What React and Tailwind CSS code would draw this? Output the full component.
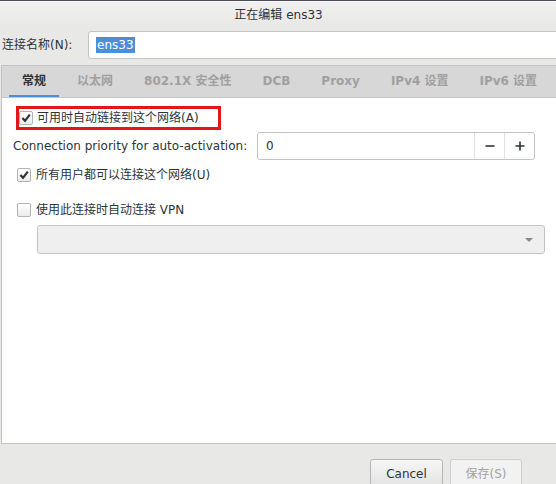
import React from 'react';

const font = { fontFamily: '"DejaVu Sans", "Noto Sans CJK SC", sans-serif' };

const Check = ({ checked }) => (
  <span className="flex items-center justify-center w-[14px] h-[14px] rounded-[2px] border border-[#b4b4b4] bg-gradient-to-b from-white to-[#ececec] shrink-0">
    {checked && (
      <svg width="10" height="10" viewBox="0 0 10 10">
        <path d="M1.4 5 L4 7.8 L8.8 1.6" fill="none" stroke="#2e3436" strokeWidth="2.2" />
      </svg>
    )}
  </span>
);

const tabs = ['常规', '以太网', '802.1X 安全性', 'DCB', 'Proxy', 'IPv4 设置', 'IPv6 设置'];

export default function App() {
  return (
    <div
      className="w-[556px] h-[484px] overflow-hidden bg-[#e8e8e7] flex flex-col text-[12px] text-[#2e3436]"
      style={font}
    >
      {/* title bar */}
      <div className="h-[1px] bg-[#4b4d55] shrink-0"></div>
      <div className="h-[26px] shrink-0 flex items-center justify-center bg-gradient-to-b from-[#f0f0f0] to-[#e8e8e7] border-t border-[#f8f8f8]">
        <span className="pl-[1px]">正在编辑 ens33</span>
      </div>

      {/* name row */}
      <div className="mt-[4px] h-[28px] flex items-center shrink-0">
        <span className="pl-[2px] w-[88px] shrink-0">连接名称(N):</span>
        <div className="w-[490px] h-[28px] shrink-0 rounded-[3px] border border-[#c4c4c4] bg-white flex items-center pl-[7px]">
          <span className="bg-[#4a90d9] text-white px-[1px] leading-[16px]">ens33</span>
        </div>
      </div>

      {/* notebook */}
      <div className="mt-[6px] ml-[1px] w-[570px] h-[379px] shrink-0 flex flex-col border border-[#c2c2c2] bg-white">
        <div className="h-[32px] shrink-0 bg-[#d7d7d7] border-b border-[#c6c6c6] flex items-stretch pl-[7px] gap-[5px] font-bold">
          {tabs.map((t, i) => (
            <div
              key={t}
              className={`flex items-center px-[13px] border-b-2 ${
                i === 0 ? 'border-[#4a90d9] text-[#2e3436]' : 'border-transparent text-[#a0a0a0]'
              }`}
            >
              {t}
            </div>
          ))}
        </div>

        <div className="flex flex-col relative">
          {/* row 1 */}
          <div className="mt-[10px] h-[20px] flex items-center ml-[17px] gap-[4px]">
            <Check checked />
            <span>可用时自动链接到这个网络(A)</span>
          </div>
          <div className="absolute left-[14px] top-[8px] w-[205px] h-[24px] border-[3px] border-[#e0181b]"></div>

          {/* row 2 */}
          <div className="mt-[4px] h-[28px] flex items-center">
            <span className="ml-[11px] w-[244px] shrink-0">Connection priority for auto-activation:</span>
            <div className="w-[278px] h-[28px] shrink-0 rounded-[3px] border border-[#c4c4c4] bg-white flex">
              <span className="flex-1 flex items-center pl-[8px]">0</span>
              <span className="w-[30px] flex items-center justify-center border-l border-[#e2e2e2]">
                <svg width="10" height="10" viewBox="0 0 10 10"><path d="M0.5 5 H9.5" stroke="#2e3436" strokeWidth="1.6" /></svg>
              </span>
              <span className="w-[30px] flex items-center justify-center border-l border-[#e2e2e2]">
                <svg width="10" height="10" viewBox="0 0 10 10"><path d="M0.5 5 H9.5 M5 0.5 V9.5" stroke="#2e3436" strokeWidth="1.6" /></svg>
              </span>
            </div>
          </div>

          {/* row 3 */}
          <div className="mt-[5px] h-[20px] flex items-center ml-[15px] gap-[5px]">
            <Check checked />
            <span>所有用户都可以连接这个网络(U)</span>
          </div>

          {/* row 4 */}
          <div className="mt-[15px] h-[20px] flex items-center ml-[15px] gap-[5px]">
            <Check />
            <span>使用此连接时自动连接 VPN</span>
          </div>

          {/* combo */}
          <div className="mt-[5px] ml-[35px] w-[508px] h-[29px] rounded-[3px] border border-[#c4c4c4] bg-[#efefef] flex items-center justify-end pr-[10px]">
            <svg width="10" height="6" viewBox="0 0 10 6"><path d="M1 1 H9 L5 5 Z" fill="#8a8a8a" /></svg>
          </div>
        </div>
      </div>

      {/* buttons */}
      <div className="mt-[15px] flex justify-end gap-[7px] pr-[34px]">
        <button className="w-[73px] h-[30px] rounded-[3px] border border-[#b6b6b6] bg-gradient-to-b from-[#f6f6f6] to-[#e2e2e2] text-[#2e3436]">
          Cancel
        </button>
        <button className="w-[72px] h-[30px] rounded-[3px] border border-[#cfcfcf] bg-[#f2f2f2] text-[#a2a2a2]">
          保存(S)
        </button>
      </div>
    </div>
  );
}
